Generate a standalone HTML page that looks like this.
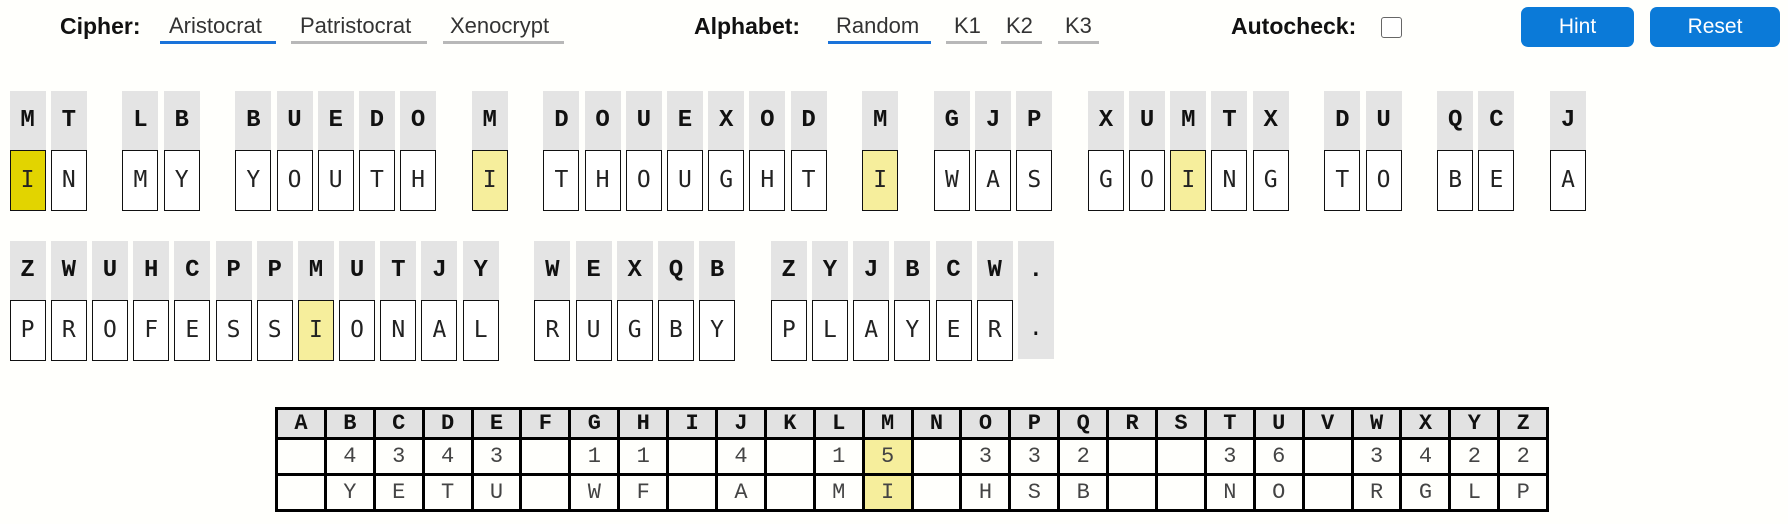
<!DOCTYPE html>
<html><head><meta charset="utf-8"><style>
body{margin:0;width:1788px;height:524px;background:#fffffc;position:relative;overflow:hidden;font-family:"Liberation Sans",sans-serif;color:#111}
.a{position:absolute;white-space:nowrap}
.lbl{font-weight:bold;font-size:23px;top:13px}
.opt{font-size:22px;top:13px;color:#333}
.ul{position:absolute;height:3px;top:41px;background:#b8b8b8}
.ul.b{background:#1a73d9}
.btn{position:absolute;top:7px;height:40px;background:#0b7ad8;border-radius:7px;color:#fff;font-size:21px;text-align:center;line-height:40px}
.row{position:absolute;left:9.6px;display:flex}
.c{width:36px;margin-right:5.2px;position:relative}
.c .t{height:59px;background:#e4e4e4;font-family:"Liberation Mono",monospace;font-weight:bold;font-size:24px;text-align:center;line-height:59px}
.c .p{height:59px;border:1px solid #111;width:34px;background:#fff;font-family:"DejaVu Sans Mono",monospace;font-size:23px;text-align:center;line-height:59px;color:#222}
.c .y{background:#f6ee9c}
.c .Y{background:#e2d400}
.s{width:25.3px;margin-right:5.2px}
.dot{background:#e4e4e4}
table{position:absolute;left:275px;top:407px;border-collapse:collapse;border:3px solid #000}
td{border:3px solid #000;width:45.9px;text-align:center;font-family:"Liberation Mono",monospace;font-size:22px;color:#444;padding:0}
tr.h td{background:#e2e2e2;font-weight:bold;color:#111;height:27px;font-size:22px}
tr.n td{height:33px}
td.m{background:#f6ee9c}
</style></head><body>
<div class="a lbl" style="left:60px">Cipher:</div>
<div class="a opt" style="left:169px">Aristocrat</div><div class="ul b" style="left:160px;width:116px"></div>
<div class="a opt" style="left:300px">Patristocrat</div><div class="ul" style="left:291px;width:136px"></div>
<div class="a opt" style="left:450px">Xenocrypt</div><div class="ul" style="left:443px;width:121px"></div>
<div class="a lbl" style="left:694px">Alphabet:</div>
<div class="a opt" style="left:836px">Random</div><div class="ul b" style="left:828px;width:103px"></div>
<div class="a opt" style="left:954px">K1</div><div class="ul" style="left:946px;width:41px"></div>
<div class="a opt" style="left:1006px">K2</div><div class="ul" style="left:1001px;width:41px"></div>
<div class="a opt" style="left:1065px">K3</div><div class="ul" style="left:1058px;width:41px"></div>
<div class="a lbl" style="left:1231px">Autocheck:</div>
<div class="a" style="left:1381px;top:17px;width:19px;height:19px;border:1.5px solid #666;border-radius:3px;background:#fff"></div>
<div class="btn" style="left:1521px;width:113px">Hint</div>
<div class="btn" style="left:1650px;width:130px">Reset</div>

<div class="row" style="top:91px">
<div class="c"><div class="t">M</div><div class="p Y">I</div></div><div class="c"><div class="t">T</div><div class="p">N</div></div><div class="s"></div>
<div class="c"><div class="t">L</div><div class="p">M</div></div><div class="c"><div class="t">B</div><div class="p">Y</div></div><div class="s"></div>
<div class="c"><div class="t">B</div><div class="p">Y</div></div><div class="c"><div class="t">U</div><div class="p">O</div></div><div class="c"><div class="t">E</div><div class="p">U</div></div><div class="c"><div class="t">D</div><div class="p">T</div></div><div class="c"><div class="t">O</div><div class="p">H</div></div><div class="s"></div>
<div class="c"><div class="t">M</div><div class="p y">I</div></div><div class="s"></div>
<div class="c"><div class="t">D</div><div class="p">T</div></div><div class="c"><div class="t">O</div><div class="p">H</div></div><div class="c"><div class="t">U</div><div class="p">O</div></div><div class="c"><div class="t">E</div><div class="p">U</div></div><div class="c"><div class="t">X</div><div class="p">G</div></div><div class="c"><div class="t">O</div><div class="p">H</div></div><div class="c"><div class="t">D</div><div class="p">T</div></div><div class="s"></div>
<div class="c"><div class="t">M</div><div class="p y">I</div></div><div class="s"></div>
<div class="c"><div class="t">G</div><div class="p">W</div></div><div class="c"><div class="t">J</div><div class="p">A</div></div><div class="c"><div class="t">P</div><div class="p">S</div></div><div class="s"></div>
<div class="c"><div class="t">X</div><div class="p">G</div></div><div class="c"><div class="t">U</div><div class="p">O</div></div><div class="c"><div class="t">M</div><div class="p y">I</div></div><div class="c"><div class="t">T</div><div class="p">N</div></div><div class="c"><div class="t">X</div><div class="p">G</div></div><div class="s"></div>
<div class="c"><div class="t">D</div><div class="p">T</div></div><div class="c"><div class="t">U</div><div class="p">O</div></div><div class="s"></div>
<div class="c"><div class="t">Q</div><div class="p">B</div></div><div class="c"><div class="t">C</div><div class="p">E</div></div><div class="s"></div>
<div class="c"><div class="t">J</div><div class="p">A</div></div>
</div>

<div class="row" style="top:241px">
<div class="c"><div class="t">Z</div><div class="p">P</div></div><div class="c"><div class="t">W</div><div class="p">R</div></div><div class="c"><div class="t">U</div><div class="p">O</div></div><div class="c"><div class="t">H</div><div class="p">F</div></div><div class="c"><div class="t">C</div><div class="p">E</div></div><div class="c"><div class="t">P</div><div class="p">S</div></div><div class="c"><div class="t">P</div><div class="p">S</div></div><div class="c"><div class="t">M</div><div class="p y">I</div></div><div class="c"><div class="t">U</div><div class="p">O</div></div><div class="c"><div class="t">T</div><div class="p">N</div></div><div class="c"><div class="t">J</div><div class="p">A</div></div><div class="c"><div class="t">Y</div><div class="p">L</div></div><div class="s"></div>
<div class="c"><div class="t">W</div><div class="p">R</div></div><div class="c"><div class="t">E</div><div class="p">U</div></div><div class="c"><div class="t">X</div><div class="p">G</div></div><div class="c"><div class="t">Q</div><div class="p">B</div></div><div class="c"><div class="t">B</div><div class="p">Y</div></div><div class="s"></div>
<div class="c"><div class="t">Z</div><div class="p">P</div></div><div class="c"><div class="t">Y</div><div class="p">L</div></div><div class="c"><div class="t">J</div><div class="p">A</div></div><div class="c"><div class="t">B</div><div class="p">Y</div></div><div class="c"><div class="t">C</div><div class="p">E</div></div><div class="c"><div class="t">W</div><div class="p">R</div></div>
<div class="c dot" style="height:118px"><div class="t">.</div><div class="t" style="background:none;font-weight:normal">.</div></div>
</div>

<table>
<tr class="h"><td>A</td><td>B</td><td>C</td><td>D</td><td>E</td><td>F</td><td>G</td><td>H</td><td>I</td><td>J</td><td>K</td><td>L</td><td>M</td><td>N</td><td>O</td><td>P</td><td>Q</td><td>R</td><td>S</td><td>T</td><td>U</td><td>V</td><td>W</td><td>X</td><td>Y</td><td>Z</td></tr>
<tr class="n"><td></td><td>4</td><td>3</td><td>4</td><td>3</td><td></td><td>1</td><td>1</td><td></td><td>4</td><td></td><td>1</td><td class="m">5</td><td></td><td>3</td><td>3</td><td>2</td><td></td><td></td><td>3</td><td>6</td><td></td><td>3</td><td>4</td><td>2</td><td>2</td></tr>
<tr class="n"><td></td><td>Y</td><td>E</td><td>T</td><td>U</td><td></td><td>W</td><td>F</td><td></td><td>A</td><td></td><td>M</td><td class="m">I</td><td></td><td>H</td><td>S</td><td>B</td><td></td><td></td><td>N</td><td>O</td><td></td><td>R</td><td>G</td><td>L</td><td>P</td></tr>
</table>
</body></html>
